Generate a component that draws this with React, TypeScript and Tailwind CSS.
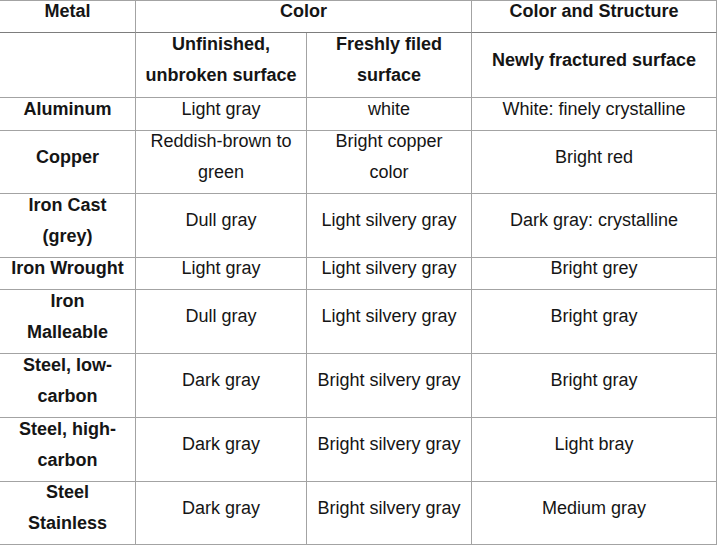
import React from 'react';

// Metal identification by colour - table data
type Row = {
  metal: string[];
  unfinished: string[];
  filed: string[];
  fractured: string[];
  h: string;
};

const rows: Row[] = [
  { metal: ['Aluminum'], unfinished: ['Light gray'], filed: ['white'], fractured: ['White: finely crystalline'], h: 'h-[33px]' },
  { metal: ['Copper'], unfinished: ['Reddish-brown to', 'green'], filed: ['Bright copper', 'color'], fractured: ['Bright red'], h: 'h-[63px]' },
  { metal: ['Iron Cast', '(grey)'], unfinished: ['Dull gray'], filed: ['Light silvery gray'], fractured: ['Dark gray: crystalline'], h: 'h-[64px]' },
  { metal: ['Iron Wrought'], unfinished: ['Light gray'], filed: ['Light silvery gray'], fractured: ['Bright grey'], h: 'h-[32px]' },
  { metal: ['Iron', 'Malleable'], unfinished: ['Dull gray'], filed: ['Light silvery gray'], fractured: ['Bright gray'], h: 'h-[64px]' },
  { metal: ['Steel, low-', 'carbon'], unfinished: ['Dark gray'], filed: ['Bright silvery gray'], fractured: ['Bright gray'], h: 'h-[64px]' },
  { metal: ['Steel, high-', 'carbon'], unfinished: ['Dark gray'], filed: ['Bright silvery gray'], fractured: ['Light bray'], h: 'h-[64px]' },
  { metal: ['Steel', 'Stainless'], unfinished: ['Dark gray'], filed: ['Bright silvery gray'], fractured: ['Medium gray'], h: 'h-[62px]' },
];

const Lines = ({ lines }: { lines: string[] }) => (
  <div className="-translate-y-[5px]">
    {lines.map((l, i) => (
      <div key={i} className="whitespace-nowrap">{l}</div>
    ))}
  </div>
);

const cell = 'border-r border-b border-[#a3a3a3] p-0 text-center align-middle';

const App = () => {
  return (
    <div className="min-h-screen bg-white">
      <table
        className="table-fixed border-separate border-spacing-0 border-t border-[#a3a3a3] w-[717px] text-[18px] leading-[31px] text-[#151515]"
        style={{ fontFamily: '"Liberation Sans", Arial, sans-serif' }}
      >
        <colgroup>
          <col className="w-[136px]" />
          <col className="w-[171px]" />
          <col className="w-[165px]" />
          <col className="w-[245px]" />
        </colgroup>
        <thead className="font-bold">
          <tr className="h-[32px]">
            <th className={`${cell} border-b-[#7d7d7d]`}><Lines lines={['Metal']} /></th>
            <th colSpan={2} className={`${cell} border-b-[#7d7d7d]`}><Lines lines={['Color']} /></th>
            <th className={`${cell} border-b-[#7d7d7d]`}><Lines lines={['Color and Structure']} /></th>
          </tr>
          <tr className="h-[65px]">
            <th className={cell}></th>
            <th className={cell}><Lines lines={['Unfinished,', 'unbroken surface']} /></th>
            <th className={cell}><Lines lines={['Freshly filed', 'surface']} /></th>
            <th className={cell}><Lines lines={['Newly fractured surface']} /></th>
          </tr>
        </thead>
        <tbody>
          {rows.map((r) => (
            <tr key={r.metal.join(' ')} className={r.h}>
              <td className={`${cell} font-bold`}><Lines lines={r.metal} /></td>
              <td className={cell}><Lines lines={r.unfinished} /></td>
              <td className={cell}><Lines lines={r.filed} /></td>
              <td className={cell}><Lines lines={r.fractured} /></td>
            </tr>
          ))}
        </tbody>
      </table>
    </div>
  );
};

export default App;
